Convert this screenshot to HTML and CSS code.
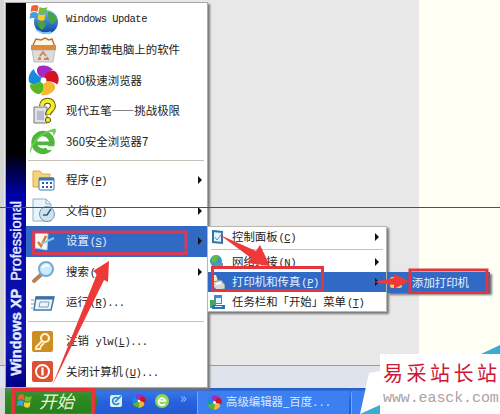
FILE: index.html
```
<!DOCTYPE html>
<html lang="zh-CN">
<head>
<meta charset="utf-8">
<title>Windows XP</title>
<link rel="stylesheet" href="styles.css">
</head>
<body>
<svg width="0" height="0" class="defs">
  <defs>
    <symbol id="pinwheel" viewBox="0 0 32 32">
      <path fill="#a52ac4" d="M14 13C8 9 8 3 12 1q8-2 14 4-6 2-8 9z"/>
      <path fill="#d41224" d="M17 14c1-6 5-9 10-8 5 3 6 10 3 14-3-3-7-3-12-3z"/>
      <path fill="#f6b832" d="M18 17c6-1 11 3 10 7-3 6-9 8-15 7 3-3 4-8 3-13z"/>
      <path fill="#57b822" d="M15 17c3 7 0 13-4 13-5-1-9-5-9-10 4 0 8 0 12-4z"/>
      <path fill="#168dda" d="M14 16C9 21 3 21 1 17c-1-5 1-10 5-13 1 4 4 7 8 9z"/>
      <circle cx="16" cy="16" r="3" fill="#fff"/>
    </symbol>
    <symbol id="ebrowser" viewBox="0 0 32 32">
      <circle cx="16" cy="17" r="9.5" fill="none" stroke="#4db83c" stroke-width="6"/>
      <path d="M8 18h18" stroke="#4db83c" stroke-width="4"/>
      <path d="M18 21h12v4H21z" fill="#fff"/>
      <path d="M3 29C-1 23 11 5 29 2c2 2 0 6-2 8 0-3 0-5-4-4C12 8 3 21 3 29" fill="#75ce5c"/>
    </symbol>
    <symbol id="flag" viewBox="0 0 20 20">
      <path d="M3 3q4-2 7 0L9 9Q6 7 2 9z" fill="#ef6331"/>
      <path d="M11 4q4 2 8 0l-2 6q-4 2-7-1z" fill="#75bd35"/>
      <path d="M2 10q4-2 7 0l-1 6q-4-2-7 0z" fill="#429de5"/>
      <path d="M10 11q3 2 7 0l-1 6q-4 2-7-1z" fill="#f8cb35"/>
    </symbol>
    <linearGradient id="globe" x2="0" y2="1"><stop stop-color="#67b9ed"/><stop offset="1" stop-color="#08419d"/></linearGradient>
  </defs>
</svg>

<main class="desktop">
  <div class="workspace">
    <div class="canvas"></div>
    <div class="statusbar"></div>
  </div>
  <footer class="taskbar">
    <div class="start"><svg width="17" height="18"><use href="#flag"/></svg><span>开始</span></div>
    <div class="quick">
      <svg width="14" height="14" viewBox="0 0 14 14"><rect x="1" y="1" width="12" height="12" rx="2" fill="#d9f0fa"/><path d="M10 5a3.500 3.500 0 1 0 0 4M6 8l6-6" fill="none" stroke="#2787c6" stroke-width="1.6"/></svg>
      <svg width="14" height="14"><use href="#pinwheel"/></svg>
      <svg width="14" height="14" viewBox="0 0 14 14"><circle cx="7" cy="7" r="7" fill="#8bd957"/><path d="M10 9.5A3.5 3.5 0 1 1 10.4 7H4" fill="none" stroke="#fff" stroke-width="1.7"/></svg>
      <span>»</span>
    </div>
    <div class="task"><svg width="15" height="15"><use href="#pinwheel"/></svg><span>高级编辑器_百度<em>...</em></span></div>
    <div class="task next"><svg width="15" height="15"><use href="#ebrowser"/></svg></div>
  </footer>
</main>

<nav class="menu start-menu">
  <div class="brand"><span><b>Windows XP</b>&nbsp; Professional</span></div>
  <div class="items">
    <div class="item"><i><svg width="31" height="31" viewBox="0 0 31 31"><circle cx="18" cy="18" r="12" fill="url(#globe)"/><path d="M10 18c3-4 5-1 7 1s-1 5-3 7c-2-2-5-4-4-8M20 8c5 0 8 4 9 8-4 1-3 5-6 4s0-6-3-7z" fill="#4aa43e"/><path d="M8 26q8 5 15 2" fill="none" stroke="#87d4fa" stroke-width="1.5"/><g transform="translate(0 -1)"><use href="#flag" width="21" height="20"/></g></svg></i><span class="latin">Windows Update</span></div>
    <div class="item"><i><svg width="27" height="29" viewBox="0 0 27 29"><path d="M2 12 6 4l5 1 4-2 4 2 3-1 3 8z" fill="#fff6df" stroke="#b57432" stroke-width="1.4"/><path d="M1 10h25v5H1z" fill="#dc8a3d"/><path d="M2 15h23l-2 12H4z" fill="#dedcda" stroke="#aaa" stroke-width=".7"/><path d="m10 21 3-4 3 4m1 1 1 2h-4m-3 0H9l1-2" fill="none" stroke="#d48258" stroke-width="1.8"/></svg></i><span>强力卸载电脑上的软件</span></div>
    <div class="item"><i><svg width="31" height="31"><use href="#pinwheel"/></svg></i><span>360极速浏览器</span></div>
    <div class="item"><i><svg width="25" height="29" viewBox="0 0 25 29"><path d="M3 10h13v16H3z" fill="#e0e0e7" stroke="#777" /><path d="M6 14h7v9H6z" fill="#b8bbce"/><path d="M11 9c0-7 11-7 11 0 0 4-5 4-5 9" fill="none" stroke="#5d5710" stroke-width="6"/><path d="M11 9c0-7 11-7 11 0 0 4-5 4-5 8.500" fill="none" stroke="#f6ed27" stroke-width="4"/><circle cx="17" cy="23" r="2.600" fill="#f6ed27" stroke="#5d5710"/></svg></i><span>现代五笔——挑战极限</span></div>
    <div class="item"><i><svg width="30" height="31"><use href="#ebrowser"/></svg></i><span>360安全浏览器7</span></div>
    <hr>
    <div class="item sub"><i><svg width="24" height="24" viewBox="0 0 24 24"><path d="M2 3h7l2 3h8v13H2z" fill="#f5d57b" stroke="#d9ac46"/><rect x="8" y="10" width="15" height="12" rx="1" fill="#fff" stroke="#3d79b8"/><path d="M8 11h15" stroke="#3975bd" stroke-width="3"/><path d="M11 15h2m2 0h2m2 0h2m-10 4h2m2 0h2m2 0h2" stroke="#315bac" stroke-width="2"/></svg></i><span>程序<em>(<u>P</u>)</em></span></div>
    <div class="item sub"><i><svg width="24" height="25" viewBox="0 0 24 25"><path d="M2 1h13l5 5v17H2z" fill="#eaf3fb" stroke="#92b1cc"/><path d="M15 1v5h5" fill="none" stroke="#92b1cc"/><circle cx="16" cy="16" r="7.5" fill="#cfe3ef" stroke="#7499b3"/><path d="m20 11-4 6h-4" fill="none" stroke="#345d79" stroke-width="1.5"/></svg></i><span>文档<em>(<u>D</u>)</em></span></div>
    <div class="item sub selected"><i><svg width="24" height="24" viewBox="0 0 24 24"><path d="m4 3 13 1-1 17-12-2z" fill="#f8f9f4" stroke="#a9cce4"/><path d="m7 13 3 4 5-10" fill="none" stroke="#df7a28" stroke-width="2.5"/><path d="m10 15 13-6" stroke="#88cbe8" stroke-width="2"/></svg></i><span>设置<em>(<u>S</u>)</em></span></div>
    <div class="item sub"><i><svg width="24" height="24" viewBox="0 0 24 24"><path d="m3 21 9-8" stroke="#b6815b" stroke-width="4" stroke-linecap="round"/><circle cx="15" cy="9" r="7" fill="#caeafd" stroke="#7ba9ce" stroke-width="2"/><path d="M11 8q3-4 7-2" fill="none" stroke="#fff" stroke-width="2"/></svg></i><span>搜索<em>(<u>C</u>)</em></span></div>
    <div class="item"><i><svg width="24" height="20" viewBox="0 0 24 20"><path d="M5 4h18l-3 13H3z" fill="#eef5fa" stroke="#427ba5" stroke-width="1.5"/><path d="M5 5h18" stroke="#3d70a2" stroke-width="3"/><path d="m9 9 9 0-1 5H8zM0 7h3M0 11h3M0 15h2" fill="none" stroke="#779db9"/></svg></i><span>运行<em>(<u>R</u>)...</em></span></div>
    <hr>
    <div class="item"><i class="key"><svg width="21" height="21" viewBox="0 0 21 21"><circle cx="13" cy="7" r="4" fill="none" stroke="#fff4cf" stroke-width="2.2"/><path d="m10 10-6 6v2h4l1-3 3-3" fill="none" stroke="#fff4cf" stroke-width="1.8"/></svg></i><span>注销<em>&nbsp;ylw(<u>L</u>)...</em></span></div>
    <div class="item"><i class="key power"><svg width="21" height="21" viewBox="0 0 21 21"><circle cx="10.5" cy="10.5" r="6.5" fill="none" stroke="#fff" stroke-width="2"/><path d="M10.5 6.5v8" stroke="#fff" stroke-width="2.2"/></svg></i><span>关闭计算机<em>(<u>U</u>)...</em></span></div>
  </div>
</nav>

<nav class="menu submenu">
  <div class="item sub"><i><svg width="15" height="17" viewBox="0 0 15 17"><path d="m3 2 9 1v11l-9-1z" fill="#e3f4ff" stroke="#3273a8" stroke-width="2"/><path d="m5 8 2 3 6-8" fill="none" stroke="#5c96be"/></svg></i><span>控制面板<em>(<u>C</u>)</em></span></div>
  <hr>
  <div class="item sub"><i><svg width="16" height="16" viewBox="0 0 16 16"><circle cx="7" cy="7" r="6" fill="#3698ce"/><path d="M2 4q4-5 8-2L7 8 3 9z" fill="#67b840"/><path d="M6 9h8v5H6z" fill="#5c95ad"/></svg></i><span>网络连接<em>(<u>N</u>)</em></span></div>
  <div class="item sub selected"><i><svg width="16" height="17" viewBox="0 0 16 17"><path d="M2 1h5l2 6H3z" fill="#f7ebbb"/><path d="m4 8 8-2 4 5v4l-8 1-4-4z" fill="#d7d8d3" stroke="#898e92"/><path d="m7 10 5-1" stroke="#fff" stroke-width="2"/></svg></i><span>打印机和传真<em>(<u>P</u>)</em></span></div>
  <div class="item"><i><svg width="16" height="16" viewBox="0 0 16 16"><path d="M5 1h8v9H5z" fill="#3f89d3"/><path d="M1 6h6v8H1z" fill="#44aa55"/><path d="M3 11h13v4H3z" fill="#2d72be"/><path d="M7 4h5v5H7zM6 12h7v1H6z" fill="#e2f4ff"/></svg></i><span>任务栏和「开始」菜单<em>(<u>T</u>)</em></span></div>
</nav>

<nav class="menu flyout">
  <div class="item selected"><i><svg width="15" height="15" viewBox="0 0 15 15"><rect x="1" y="2" width="12" height="11" rx="2" fill="#efc561"/><path d="M3 6h8v5H3z" fill="#f9e6a5"/></svg></i><span>添加打印机</span></div>
</nav>

<svg class="marks" width="500" height="414" viewBox="0 0 500 414">
  <rect y="207" width="500" height="1" fill="#b8222d"/>
  <g fill="none" stroke="#e5343b" stroke-width="3">
    <path d="M33.500 232h152.500v21.500H33.500z" stroke="#d63c57"/>
    <path d="M212.500 267.500h110v23H212.500z"/>
    <path d="M410 270h77v22.500h-77z"/>
    <path d="M13 390h80v25H13z" stroke-width="4"/>
  </g>
  <g fill="#ee393a">
    <path d="m52 386 45-112-4-3 16-10-1 21-4-2z"/>
    <path d="m220 235 36 16 4-6 10 21-23-3 4-5z"/>
    <path d="m373 282 21-4v-4l15 7-15 8v-4z"/>
  </g>
</svg>

<aside class="watermark">
  <svg width="140" height="70" viewBox="0 0 140 70"><path d="M9 29 20 27v43H0z" fill="#fff"/><path d="M0 70 20 61v9z" fill="#3aabd1"/><path d="m121 10 19-9v9z" fill="#3aabd1"/></svg>
  <div class="stamp"><strong>易采站长站</strong><span>www.easck.com</span></div>
</aside>
</body>
</html>
```
FILE: styles.css
```
* { box-sizing: border-box; }
body {
  margin: 0;
  width: 500px;
  height: 414px;
  overflow: hidden;
  position: relative;
  font: 11.4px/1 "Noto Sans CJK SC", sans-serif;
  color: #222;
}
svg { display: block; flex: none; }
.defs { position: absolute; }
.desktop { height: 414px; display: flex; flex-direction: column; background: #d7d7d5; }
.workspace { height: 388px; background: #fffff4; }
.canvas { width: 419px; height: 365px; background: #e8e8e8; border-left: 4px solid #d5d5d3; }
.statusbar { width: 419px; height: 23px; border-top: 1px solid #999da3; background: #dfe3ec; }
.taskbar {
  height: 26px;
  margin-left: 5px;
  display: flex;
  background: linear-gradient(#2259c4, #3676e8 15%, #2860dc 55%, #245bd4);
}
.start {
  width: 92px;
  padding: 0 0 0 11px;
  display: flex;
  align-items: center;
  gap: 6px;
  background: linear-gradient(#469447, #318c25 30%, #258019);
  border-radius: 0 10px 10px 0;
  color: #e9f3db;
  font-size: 17.500px;
  font-style: italic;
}
.start span { white-space: nowrap; }
.quick { width: 100px; padding-left: 12px; display: flex; align-items: center; gap: 9px; color: #9fc6ff; font-size: 14px; }
.quick span { margin: -8px 0 0 2px; }
.task {
  width: 152px;
  margin-top: 3px;
  padding-left: 9px;
  display: flex;
  align-items: center;
  gap: 4px;
  border-left: 1px solid #6faaf9;
  border-radius: 3px 0 0;
  background: #3b7ff0;
  color: #d9eaff;
  white-space: nowrap;
}
.task em { font: 10.500px "Liberation Mono", monospace; }
.task.next { width: 60px; margin-left: 2px; }
.menu { position: absolute; background: #fff; border: 1px solid #b9b7ad; box-shadow: 2px 2px 2px #777; }
.item { display: flex; align-items: center; white-space: nowrap; position: relative; }
.item i { flex: none; display: flex; align-items: center; justify-content: center; }
.item em, .latin { font-family: "Liberation Mono", monospace; font-style: normal; font-size: 10.500px; letter-spacing: -.52px; }
.item em { margin-left: 1px; }
.item u { text-underline-offset: 1px; }
.selected { background: #316ac5; color: #e8f1ff; }
.sub::after { content: ""; margin-left: auto; border: 4px solid transparent; border-left-color: #111; border-right: 0; }
hr { height: 1px; border: 0; background: #c5c2b7; }
.start-menu { left: 5px; top: 2px; width: 203px; height: 386px; display: flex; border-color: #aaa; }
.brand {
  width: 20px;
  display: flex;
  align-items: flex-end;
  justify-content: center;
  padding-bottom: 11px;
  background: linear-gradient(#000 39%, #0000a9 50%, #1018ad 90%, #000085);
  color: #e4ecff;
}
.brand span { writing-mode: vertical-rl; transform: rotate(180deg); font: 14.500px/18px "Liberation Sans", sans-serif; white-space: nowrap; -webkit-text-stroke: .4px; }
.items { flex: 1; padding-top: 1px; }
.start-menu .item { height: 30.600px; }
.start-menu .item i { width: 34px; margin-right: 6px; }
.start-menu .sub { padding-right: 5px; }
.start-menu hr { margin: 3px 3px 4px 2px; }
.start-menu .key { width: 21px !important; height: 21px; margin: 0 13px 0 6px !important; border-radius: 2px; background: #cf8e24; }
.start-menu .power { background: #dc5035; }
.submenu { left: 207px; top: 226px; width: 180px; height: 86px; }
.submenu .item { height: 20px; }
.submenu .item i { width: 18px; margin-right: 6px; }
.submenu .sub { padding-right: 7px; }
.submenu hr { margin: 2px 3px; }
.flyout { left: 387px; top: 272px; width: 103px; height: 21px; border: 0; }
.flyout .item { height: 21px; }
.flyout i { width: 18px; margin-right: 7px; }
.marks { position: absolute; left: 0; top: 0; }
.watermark { position: absolute; left: 360px; top: 344px; width: 140px; height: 70px; }
.stamp { position: absolute; left: 20px; top: 10px; width: 120px; height: 60px; padding: 7px 0 0 3px; background: #fff; white-space: nowrap; overflow: hidden; }
.stamp strong { display: block; font-weight: 400; font-size: 20px; line-height: 23px; letter-spacing: 3.500px; color: #cc1738; }
.stamp span { display: block; margin-top: 6px; font: 15px/18px "Liberation Mono", monospace; letter-spacing: -.1px; color: #aaa2a2; }
```
